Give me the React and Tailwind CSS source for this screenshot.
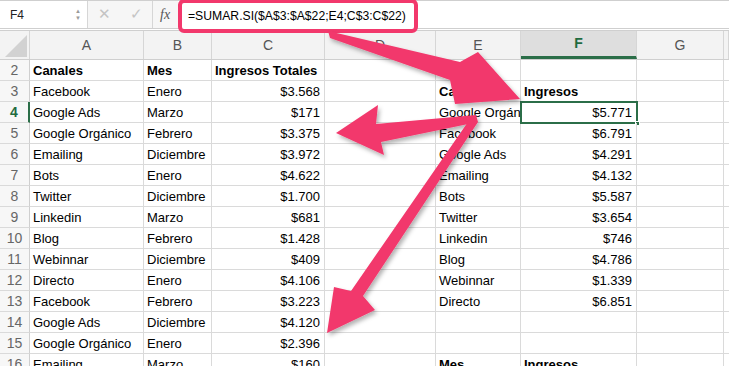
import React from "react";

// Hoja de cálculo con la fórmula SUMAR.SI destacada
const cols = ["A", "B", "C", "D", "E", "F", "G", ""];

const rows = [
  { n: 2, a: "Canales", b: "Mes", c: "Ingresos Totales", bold: true },
  { n: 3, a: "Facebook", b: "Enero", c: "$3.568", e: "Canales", f: "Ingresos", efBold: true },
  { n: 4, a: "Google Ads", b: "Marzo", c: "$171", e: "Google Orgánico", f: "$5.771", active: true },
  { n: 5, a: "Google Orgánico", b: "Febrero", c: "$3.375", e: "Facebook", f: "$6.791" },
  { n: 6, a: "Emailing", b: "Diciembre", c: "$3.972", e: "Google Ads", f: "$4.291" },
  { n: 7, a: "Bots", b: "Enero", c: "$4.622", e: "Emailing", f: "$4.132" },
  { n: 8, a: "Twitter", b: "Diciembre", c: "$1.700", e: "Bots", f: "$5.587" },
  { n: 9, a: "Linkedin", b: "Marzo", c: "$681", e: "Twitter", f: "$3.654" },
  { n: 10, a: "Blog", b: "Febrero", c: "$1.428", e: "Linkedin", f: "$746" },
  { n: 11, a: "Webinnar", b: "Diciembre", c: "$409", e: "Blog", f: "$4.786" },
  { n: 12, a: "Directo", b: "Enero", c: "$4.106", e: "Webinnar", f: "$1.339" },
  { n: 13, a: "Facebook", b: "Febrero", c: "$3.223", e: "Directo", f: "$6.851" },
  { n: 14, a: "Google Ads", b: "Diciembre", c: "$4.120" },
  { n: 15, a: "Google Orgánico", b: "Enero", c: "$2.396" },
  { n: 16, a: "Emailing", b: "Marzo", c: "$160", e: "Mes", f: "Ingresos", efBold: true },
];

const gridCols = "grid grid-cols-[30px_114px_68px_113px_111px_85px_116px_87px_1fr]";

const Cell = ({ children, right, bold, clip }) => (
  <div
    className={
      "h-[21px] border-r border-b border-[#dadada] px-[3px] leading-[21px] whitespace-nowrap text-[13px] text-black " +
      (right ? "text-right pr-[4px] " : "") +
      (bold ? "font-bold " : "") +
      (clip ? "overflow-hidden" : "overflow-visible")
    }
  >
    {children}
  </div>
);

const Arrows = () => (
  <svg
    className="absolute left-0 top-0 pointer-events-none"
    width="729"
    height="366"
    viewBox="0 0 729 366"
  >
    <defs>
      <filter id="sh" x="-20%" y="-20%" width="140%" height="140%">
        <feDropShadow dx="2" dy="3" stdDeviation="2" floodColor="#000" floodOpacity="0.3" />
      </filter>
    </defs>
    <g fill="#f2386c" filter="url(#sh)">
      <polygon points="328,31 460,62 478,52 520,99 455,104 450,80 330,38" />
      <polygon points="336,133 378,105 376,124 476,115 478,122 381,142 384,155" />
      <polygon points="470,119 478,122 363,296 375,310 327,333 334,287 351,291" />
    </g>
  </svg>
);

export default function App() {
  return (
    <div className="relative w-[729px] h-[366px] overflow-hidden bg-white font-['Liberation_Sans',Arial,sans-serif]">
      {/* barra de fórmulas */}
      <div className="flex h-[29px] items-center border-t border-b border-[#cfcfcf] bg-[#f6f6f6]">
        <div className="flex h-full w-[88px] items-center justify-between border-r border-[#d6d6d6] bg-white pl-[10px] pr-[6px]">
          <span className="text-[12px] text-[#222]">F4</span>
          <span className="flex flex-col text-[6px] leading-[7px] text-[#9a9a9a]">
            <span>▲</span>
            <span>▼</span>
          </span>
        </div>
        <div className="flex h-full w-[64px] items-center justify-around text-[#c4c4c4]">
          <span className="text-[15px]">✕</span>
          <span className="text-[15px]">✓</span>
        </div>
        <div className="flex h-full w-[26px] items-center border-l border-[#d6d6d6] pl-[7px] font-['Liberation_Serif',serif] text-[14px] italic text-[#555]">
          fx
        </div>
        <div className="relative h-full flex-1 bg-white">
          <div className="absolute left-0 top-[-2px] flex h-[34px] w-[240px] items-center rounded-[6px] border-[4px] border-[#f2386c] bg-white pl-[6px] text-[12.2px] text-black">
            =SUMAR.SI($A$3:$A$22;E4;C$3:C$22)
          </div>
        </div>
      </div>

      {/* encabezados de columna */}
      <div className={gridCols + " mt-[1px] h-[30px] border-t border-b border-[#cfcfcf] bg-[#f3f3f3]"}>
        <div className="relative border-r border-[#d6d6d6]">
          <svg className="absolute bottom-[2px] right-[2px]" width="22" height="22">
            <polygon points="0,22 22,0 22,22" fill="#d2d2d2" />
          </svg>
        </div>
        {cols.map((c, i) => (
          <div
            key={i}
            className={
              "flex items-center justify-center border-r border-[#d6d6d6] text-[14px] " +
              (c === "F"
                ? "bg-[#dedede] text-[#1f6b40] font-bold border-b-[3px] border-b-[#2b6e48]"
                : "text-[#555]")
            }
          >
            {c}
          </div>
        ))}
      </div>

      {/* filas */}
      {rows.map((r) => (
        <div key={r.n} className={gridCols}>
          <div
            className={
              "h-[21px] border-b border-[#dadada] bg-[#f7f7f7] text-center text-[14px] leading-[21px] " +
              (r.active
                ? "border-r-2 border-r-[#2b6e48] font-bold text-[#1f6b40]"
                : "border-r border-r-[#cfcfcf] text-[#666]")
            }
          >
            {r.n}
          </div>
          <Cell bold={r.bold}>{r.a}</Cell>
          <Cell bold={r.bold}>{r.b}</Cell>
          <Cell bold={r.bold} right={!r.bold}>{r.c}</Cell>
          <Cell />
          <Cell bold={r.efBold} clip>{r.e}</Cell>
          <div className="relative">
            <Cell bold={r.efBold} right={!r.efBold}>{r.f}</Cell>
            {r.active && (
              <div className="absolute left-[-1px] top-[-1px] h-[23px] w-[118px] border-2 border-[#2b6e48]">
                <div className="absolute bottom-[-4px] right-[-4px] h-[5px] w-[5px] border border-white bg-[#2b6e48]" />
              </div>
            )}
          </div>
          <Cell />
          <Cell />
        </div>
      ))}

      <Arrows />
    </div>
  );
}
